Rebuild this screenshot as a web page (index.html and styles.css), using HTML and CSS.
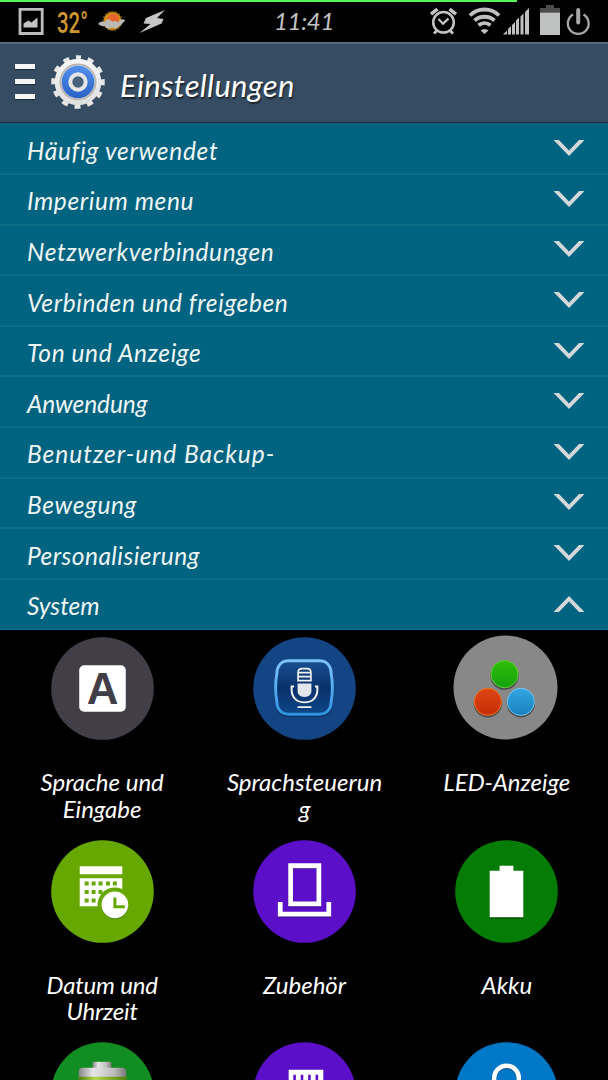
FILE: index.html
```html
<!DOCTYPE html>
<html lang="de">
<head>
  <meta charset="UTF-8">
  <meta name="viewport" content="width=device-width, initial-scale=1.0">
  <title>Einstellungen</title>
  <link rel="stylesheet" href="styles.css">
</head>
<body>
  <!-- Status bar -->
  <div class="status-bar">
    <div class="load-line"></div>
    <div class="status-left">
      <svg width="170" height="42" viewBox="0 0 170 42">
        <path d="M20 9.300h22.200v24.200H20z" fill="none" stroke="#bdbdbd" stroke-width="2.800"/>
        <path d="M23.500 27.500v-4l5-3 3 2 6-5v10z" fill="#c4c4c4"/>
        <text class="temperature" x="57" y="32.500" textLength="31" lengthAdjust="spacingAndGlyphs">32°</text>
        <circle cx="112.500" cy="21" r="9.200" fill="#d98a1c" stroke="#745c18" stroke-width="1.800" stroke-dasharray="2 1.500"/>
        <circle cx="113" cy="19.500" r="5.500" fill="#e8642c"/>
        <path d="M98 24c2-3 5-3 7-2 2-4 6-3 7 0 3-2 5-1 6 1 2-5 7-4 7-2-2 1-3 4-6 5-2 3-5 3-7 1-2 3-6 2-7-1-3 1-5-1-7-2z" fill="#b9bab6"/>
        <path d="M165 10l-19 8-2.500 5.500 7 .5-11 9 22-9.500 2-4.500-6.500-1z" fill="#c6c6c6"/>
      </svg>
    </div>
    <div class="clock">11:41</div>
    <div class="status-right">
      <svg width="180" height="42" viewBox="428 0 180 42">
        <!-- alarm -->
        <g fill="none" stroke="#c2c3c3">
          <circle cx="443.500" cy="22.300" r="10.300" stroke-width="2.500"/>
          <path d="M438.500 19l4.500 4.700 5.500-5" stroke-width="2.300"/>
          <path d="M431 14.200l6.500-5M456 14.200l-6.500-5" stroke-width="3.500"/>
          <path d="M437 30.500l-3 3M450 30.500l3 3" stroke-width="3"/>
        </g>
        <!-- wifi -->
        <g fill="none" stroke="#bfc0c0" stroke-width="3.800">
          <path d="M470 15.500c7.500-8 21.500-8 29 0"/>
          <path d="M474.500 20.500c5.500-5 14.500-5 20 0"/>
          <path d="M478.500 25.300c3.500-3 8.500-3 12 0"/>
        </g>
        <path d="M480.500 30.500c2.500-2 5.500-2 8 0l-4 3.500z" fill="#bfc0c0"/>
        <!-- signal -->
        <path d="M503 34.500l4-4v4zM508 34.500v-5.500l3-3v8.500zM512 34.500v-9.500l3-3v12.500zM516 34.500v-14l3-3v17zM520.500 34.500v-18l3-3v21zM525 34.500v-22.500l4-4v26.500z" fill="#bfc0c0"/>
        <!-- battery -->
        <path d="M546 5h8v3h6v4.500h-20V8h6z" fill="#4c4c4c"/>
        <path d="M540 12.500h20v22.500h-20z" fill="#bfc1c0"/>
        <!-- power -->
        <path d="M573 14.500a10.400 10.400 0 1 0 10.500 0" fill="none" stroke="#a8a8a8" stroke-width="2.300"/>
        <path d="M578.200 10v12.500" stroke="#a8a8a8" stroke-width="4" stroke-linecap="round"/>
      </svg>
    </div>
  </div>

  <!-- Header -->
  <div class="header">
    <div class="menu-button">
      <span></span>
      <span></span>
      <span></span>
    </div>
    <svg class="gear" viewBox="-28 -28 56 56">
      <defs>
        <linearGradient id="gearBody" x1="0" y1="0" x2="0" y2="1">
          <stop offset="0" stop-color="#f7f7f7"/>
          <stop offset="1" stop-color="#dedede"/>
        </linearGradient>
        <linearGradient id="gearBlue" x1="0" y1="0" x2="0" y2="1">
          <stop offset="0" stop-color="#5590f0"/>
          <stop offset="1" stop-color="#2862c4"/>
        </linearGradient>
      </defs>
      <circle r="24" fill="none" stroke="#e6e6e6" stroke-width="5.500" stroke-dasharray="6 6.566" stroke-dashoffset="3" transform="rotate(-90)"/>
      <circle r="23.300" fill="url(#gearBody)"/>
      <circle r="17.500" fill="none" stroke="#b9b6b1" stroke-width="2"/>
      <circle r="16.300" fill="url(#gearBlue)"/>
      <circle r="7.700" fill="#48627c" stroke="#e6e6e6" stroke-width="4"/>
    </svg>
    <h1 class="header-title">Einstellungen</h1>
  </div>

  <!-- Categories -->
  <ul class="categories">
    <li class="category"><span class="name haeufig">Häufig verwendet</span><svg class="chevron" viewBox="0 0 32 18"><path d="M0.500 1h5.500l10 10.500L26 1h5.500L16 17z"/></svg></li>
    <li class="category"><span class="name">Imperium menu</span><svg class="chevron" viewBox="0 0 32 18"><path d="M0.500 1h5.500l10 10.500L26 1h5.500L16 17z"/></svg></li>
    <li class="category"><span class="name">Netzwerkverbindungen</span><svg class="chevron" viewBox="0 0 32 18"><path d="M0.500 1h5.500l10 10.500L26 1h5.500L16 17z"/></svg></li>
    <li class="category"><span class="name">Verbinden und freigeben</span><svg class="chevron" viewBox="0 0 32 18"><path d="M0.500 1h5.500l10 10.500L26 1h5.500L16 17z"/></svg></li>
    <li class="category"><span class="name">Ton und Anzeige</span><svg class="chevron" viewBox="0 0 32 18"><path d="M0.500 1h5.500l10 10.500L26 1h5.500L16 17z"/></svg></li>
    <li class="category"><span class="name anwendung">Anwendung</span><svg class="chevron" viewBox="0 0 32 18"><path d="M0.500 1h5.500l10 10.500L26 1h5.500L16 17z"/></svg></li>
    <li class="category"><span class="name benutzer">Benutzer-und Backup-</span><svg class="chevron" viewBox="0 0 32 18"><path d="M0.500 1h5.500l10 10.500L26 1h5.500L16 17z"/></svg></li>
    <li class="category"><span class="name">Bewegung</span><svg class="chevron" viewBox="0 0 32 18"><path d="M0.500 1h5.500l10 10.500L26 1h5.500L16 17z"/></svg></li>
    <li class="category"><span class="name personal">Personalisierung</span><svg class="chevron" viewBox="0 0 32 18"><path d="M0.500 1h5.500l10 10.500L26 1h5.500L16 17z"/></svg></li>
    <li class="category open"><span class="name system">System</span><svg class="chevron up" viewBox="0 0 32 18"><path d="M0.500 1h5.500l10 10.500L26 1h5.500L16 17z"/></svg></li>
  </ul>

  <!-- System items -->
  <div class="grid">
    <div class="item">
      <svg class="icon" viewBox="0 0 104 104">
        <circle cx="52" cy="52" r="51.800" fill="#423e48"/>
        <rect x="28.500" y="28.500" width="47" height="47" rx="5" fill="#fff"/>
        <text class="letter" x="52" y="68" text-anchor="middle" textLength="32" lengthAdjust="spacingAndGlyphs">A</text>
      </svg>
      <p class="label">Sprache und<br>Eingabe</p>
    </div>
    <div class="item">
      <svg class="icon" viewBox="0 0 104 104">
        <defs>
          <linearGradient id="micFrame" x1="0" y1="0" x2="0" y2="1">
            <stop offset="0" stop-color="#7cc5fa"/>
            <stop offset="1" stop-color="#2f93df"/>
          </linearGradient>
          <linearGradient id="micFill" x1="0" y1="0" x2="0" y2="1">
            <stop offset="0" stop-color="#194f90"/>
            <stop offset=".5" stop-color="#09326b"/>
            <stop offset="1" stop-color="#0b4586"/>
          </linearGradient>
        </defs>
        <circle cx="52" cy="52" r="51.800" fill="#134585"/>
        <path d="M36 25h31c8 0 12 6 12 13 1.500 9 1.500 19 0 28 0 7-4 13-12 13H36c-8 0-12-6-12-13-1.500-9-1.500-19 0-28 0-7 4-13 12-13z" fill="none" stroke="#0b2d5c" stroke-width="3.500"/>
        <path d="M36 24h31c8 0 12 6 12 13 1.500 9 1.500 19 0 28 0 7-4 13-12 13H36c-8 0-12-6-12-13-1.500-9-1.500-19 0-28 0-7 4-13 12-13z" fill="url(#micFill)" stroke="url(#micFrame)" stroke-width="3"/>
        <path d="M45.500 44v-8c0-3 1.500-4 4-4h5c2.500 0 4 1 4 4v8zM46 36h12M46 40h12" fill="none" stroke="#f0f0f0" stroke-width="1.700"/>
        <path d="M45 47h14v7c0 4-2.500 6.500-7 6.500s-7-2.500-7-6.500z" fill="#e2e5ea"/>
        <path d="M41.500 50h-2.500v3c0 8 5 13 13 13s13-5 13-13v-3h-2.500M45 70.800h14" fill="none" stroke="#f0f0f0" stroke-width="2"/>
      </svg>
      <p class="label">Sprachsteuerun<br>g</p>
    </div>
    <div class="item">
      <svg class="icon led" viewBox="0 0 106 106">
        <defs>
          <linearGradient id="ledGreen" x1="0" y1="0" x2="0" y2="1">
            <stop offset="0" stop-color="#31be0c"/>
            <stop offset="1" stop-color="#12a20a"/>
          </linearGradient>
          <linearGradient id="ledRed" x1="0" y1="0" x2="0" y2="1">
            <stop offset="0" stop-color="#de4514"/>
            <stop offset="1" stop-color="#c72d06"/>
          </linearGradient>
          <linearGradient id="ledBlue" x1="0" y1="0" x2="0" y2="1">
            <stop offset="0" stop-color="#31a6e2"/>
            <stop offset="1" stop-color="#1881bd"/>
          </linearGradient>
        </defs>
        <circle cx="53" cy="53" r="52.500" fill="#888"/>
        <g fill="#4c4c4c">
          <circle cx="52" cy="41" r="14.300"/>
          <circle cx="35.200" cy="69" r="14.300"/>
          <circle cx="68.500" cy="69" r="14.300"/>
        </g>
        <circle cx="52" cy="39.500" r="13.700" fill="url(#ledGreen)" stroke="#66cc3d"/>
        <circle cx="35.200" cy="67.500" r="13.700" fill="url(#ledRed)" stroke="#ee781e"/>
        <circle cx="68.500" cy="67.500" r="13.700" fill="url(#ledBlue)" stroke="#79c5ea"/>
      </svg>
      <p class="label">LED-Anzeige</p>
    </div>
    <div class="item">
      <svg class="icon" viewBox="0 0 104 104">
        <circle cx="52" cy="52" r="51.800" fill="#66a800"/>
        <path d="M29 26.500h43v8h-43zM29 38.500h43v28.500h-43z" fill="#fff"/>
        <g fill="#66a800">
          <path d="M34 42h4v4h-4zM41 42h4v4h-4zM48 42h4v4h-4zM55.500 42h4v4h-4zM62.500 42h4v4h-4zM34 50.500h4v4h-4zM41 50.500h4v4h-4zM48 50.500h4v4h-4zM34 59h4v4h-4zM41 59h4v4h-4z"/>
          <circle cx="64.500" cy="65.500" r="17.500"/>
        </g>
        <circle cx="64.500" cy="66.500" r="13.500" fill="#498000"/>
        <circle cx="64.500" cy="65.500" r="13.500" fill="#fff"/>
        <path d="M64.500 58v9.300h10" fill="none" stroke="#66a800" stroke-width="3"/>
      </svg>
      <p class="label datum">Datum und<br>Uhrzeit</p>
    </div>
    <div class="item">
      <svg class="icon" viewBox="0 0 104 104">
        <circle cx="52" cy="52" r="51.800" fill="#5b0fc8"/>
        <g fill="none" stroke="#340a7b" stroke-width="4.800" transform="translate(0 1)">
          <path d="M38 26h28.500v38.500H38zM27.500 62.500v12.300h49V62.500"/>
        </g>
        <g fill="none" stroke="#fff" stroke-width="4.800">
          <path d="M38 26h28.500v38.500H38zM27.500 62.500v12.300h49V62.500"/>
        </g>
      </svg>
      <p class="label">Zubehör</p>
    </div>
    <div class="item">
      <svg class="icon" viewBox="0 0 104 104">
        <circle cx="52" cy="52" r="51.800" fill="#057c05"/>
        <path d="M35 32h10v-5h14v5h10v47.500H35z" fill="#034d03"/>
        <path d="M35 31h10v-5h14v5h10v47H35z" fill="#fff"/>
      </svg>
      <p class="label">Akku</p>
    </div>
    <div class="item">
      <svg class="icon" viewBox="0 0 104 104">
        <defs>
          <linearGradient id="cell" x1="0" y1="0" x2="1" y2="0">
            <stop offset="0" stop-color="#858585"/>
            <stop offset=".3" stop-color="#e7e7e7"/>
            <stop offset=".75" stop-color="#bcbcbc"/>
            <stop offset="1" stop-color="#777"/>
          </linearGradient>
          <linearGradient id="charge" x1="0" y1="0" x2="1" y2="0">
            <stop offset="0" stop-color="#4f7e0c"/>
            <stop offset=".35" stop-color="#b5d74c"/>
            <stop offset="1" stop-color="#4f7e0c"/>
          </linearGradient>
        </defs>
        <circle cx="52" cy="52" r="51.800" fill="#118d21"/>
        <path d="M42 20h19v7H42z" fill="url(#cell)"/>
        <rect x="28" y="26" width="48" height="52" rx="4" fill="url(#cell)"/>
        <path d="M28 35h48v35H28z" fill="url(#charge)"/>
      </svg>
    </div>
    <div class="item">
      <svg class="icon" viewBox="0 0 104 104">
        <circle cx="52" cy="52" r="51.800" fill="#5b0fc8"/>
        <path d="M36 28h35v48H36z" fill="#fff"/>
        <path d="M42 33v10M49.500 33v10M57 33v10M64.500 33v10" stroke="#5b0fc8" stroke-width="2.600"/>
      </svg>
    </div>
    <div class="item">
      <svg class="icon" viewBox="0 0 104 104">
        <circle cx="52" cy="52" r="51.800" fill="#0078c8"/>
        <circle cx="52" cy="37.500" r="12.500" fill="none" stroke="#084a79" stroke-width="4.500"/>
        <circle cx="52" cy="36.500" r="12.500" fill="none" stroke="#fff" stroke-width="4.500"/>
      </svg>
    </div>
  </div>
</body>
</html>
```
FILE: styles.css
```css
body {
  margin: 0;
  background: #000;
  color: #fff;
  font-family: Lato, 'Liberation Sans', sans-serif;
  font-style: italic;
  font-variant-ligatures: none;
}

/* Status bar */
.status-bar {
  position: relative;
  display: flex;
  justify-content: space-between;
  height: 42px;
}

.status-bar svg {
  display: block;
}

.load-line {
  position: absolute;
  top: 0;
  left: 0;
  width: 517px;
  height: 2px;
  background: #55f455;
}

.clock {
  margin-left: 10px;
  font-size: 24px;
  line-height: 42px;
  letter-spacing: -0.3px;
  color: #c3c3c3;
}

.temperature {
  font: 500 29px Roboto, sans-serif;
  fill: #d2982c;
}

/* Header */
.header {
  box-sizing: border-box;
  display: flex;
  align-items: center;
  height: 81px;
  padding-left: 15px;
  background: #364c62;
  border-top: 2px solid #54697e;
  border-bottom: 1px solid #20293c;
}

.menu-button {
  display: flex;
  flex-direction: column;
  gap: 10px;
  width: 20px;
  margin-top: -3px;
}

.menu-button span {
  height: 5px;
  background: #f5f5f5;
  box-shadow: 0 1px 1px #1d2a38;
}

.gear {
  width: 56px;
  height: 56px;
  margin: -2px 0 0 15px;
}

.header-title {
  margin: 4px 0 0 14px;
  font-size: 31px;
  font-weight: 400;
  letter-spacing: 0.3px;
  text-shadow: 1px 2px 1px #1b2530;
}

/* Categories */
.categories {
  margin: 0;
  padding: 1.500px 0 0;
  list-style: none;
  background: #00637f;
}

.category {
  box-sizing: border-box;
  display: flex;
  align-items: center;
  justify-content: space-between;
  height: 50.600px;
  padding: 4px 23px 0 27px;
  border-bottom: 2px solid #0e6c84;
}

.category.open {
  height: 50.100px;
  border-bottom: 1px solid #087394;
}

.name {
  font-size: 24.500px;
  line-height: 30px;
  letter-spacing: 0.600px;
  color: #f0f5f6;
  white-space: nowrap;
}

.name.haeufig {
  letter-spacing: 0.700px;
}

.name.anwendung {
  letter-spacing: -0.100px;
}

.name.benutzer {
  letter-spacing: 1px;
}

.name.personal {
  letter-spacing: 0.450px;
}

.name.system {
  letter-spacing: 0;
}

.chevron {
  width: 32px;
  height: 18px;
  margin-top: -5px;
  fill: #d4d7da;
}

.chevron.up {
  transform: scaleY(-1);
}

/* System items */
.grid {
  display: grid;
  grid-template-columns: repeat(3, 1fr);
  grid-auto-rows: 202.500px;
  box-sizing: border-box;
  height: 449.900px;
  padding: 7.500px 0 0 1px;
  overflow: hidden;
}

.item {
  display: flex;
  flex-direction: column;
  align-items: center;
}

.icon {
  flex: none;
  width: 103px;
  height: 103px;
}

.icon.led {
  width: 105px;
  height: 105px;
  margin: -2px 3px 0 0;
}

.letter {
  font: bold 45px 'Liberation Sans', sans-serif;
  fill: #423e48;
}

.label {
  margin: 29px 0 0;
  font-size: 24px;
  line-height: 26.500px;
  text-align: center;
  white-space: nowrap;
}

.label.datum {
  letter-spacing: -0.200px;
}
```
